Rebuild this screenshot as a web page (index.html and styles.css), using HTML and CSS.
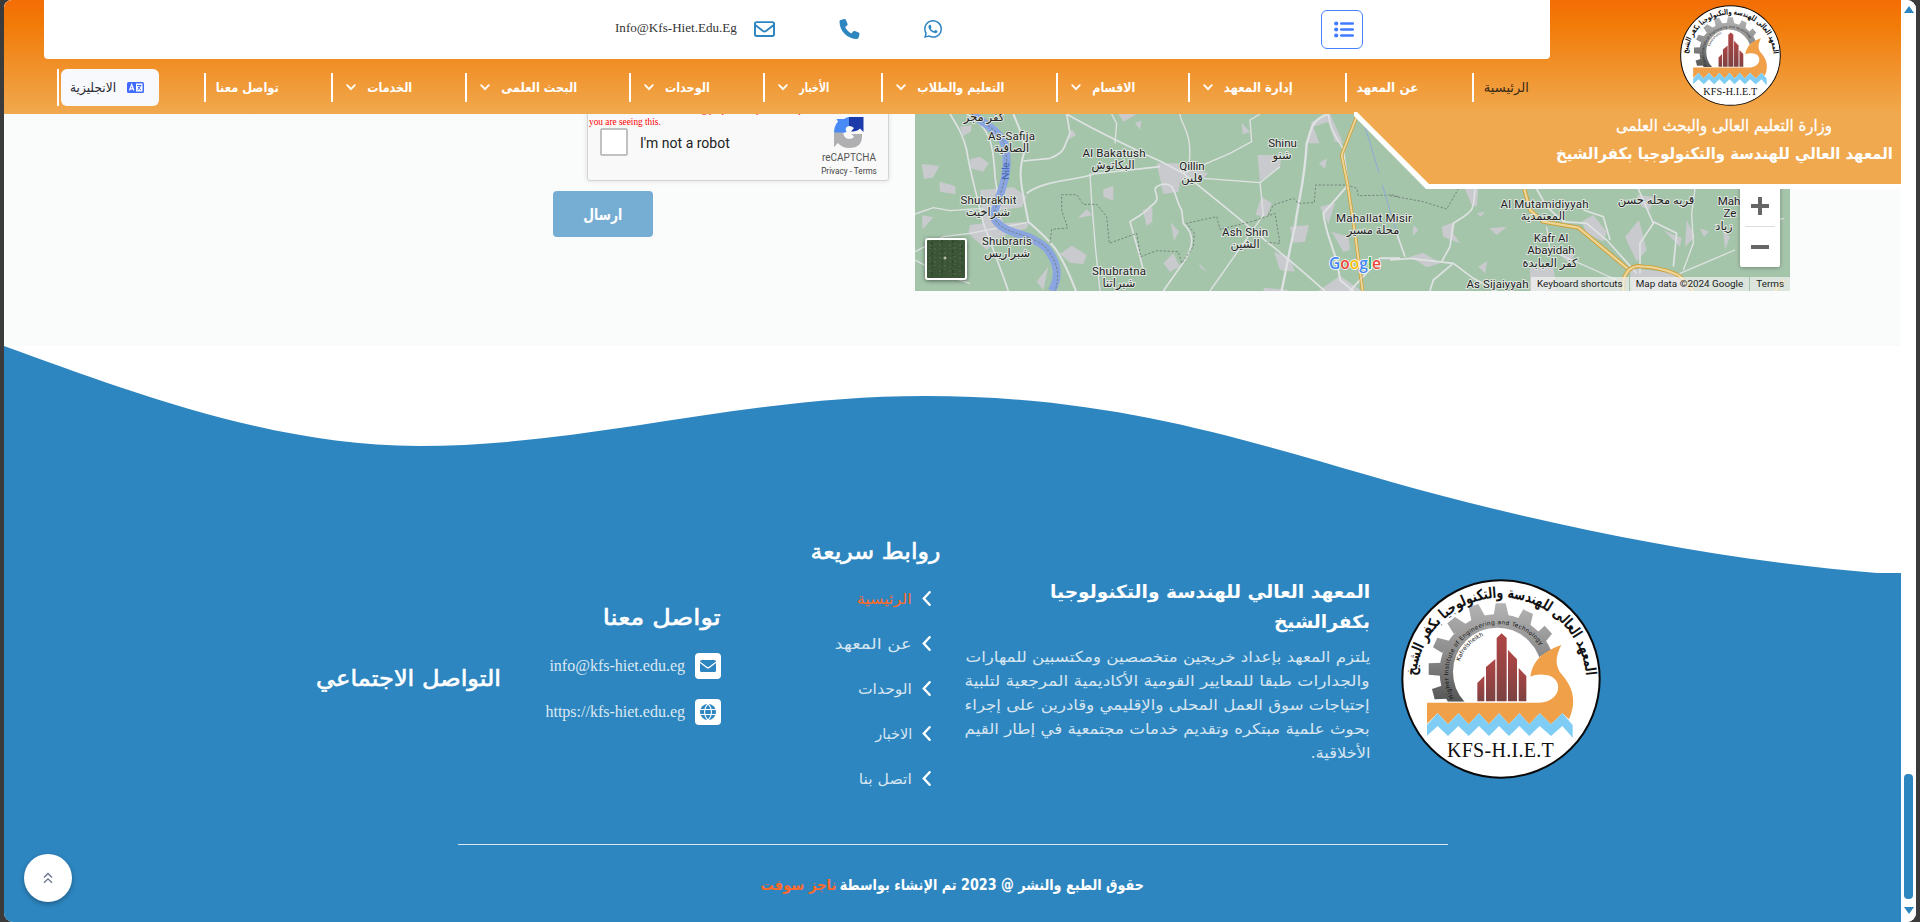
FILE: index.html
```html
<!DOCTYPE html>
<html lang="ar">
<head>
<meta charset="utf-8">
<title>المعهد العالي للهندسة والتكنولوجيا بكفرالشيخ</title>
<link rel="stylesheet" href="styles.css">
</head>
<body>
<svg class="defs" width="0" height="0" aria-hidden="true">
  <defs>
    <linearGradient id="gearU" gradientUnits="userSpaceOnUse" x1="0" y1="130" x2="0" y2="425"><stop offset="0" stop-color="#b4b4b4"/><stop offset=".5" stop-color="#8d8d8d"/><stop offset="1" stop-color="#555"/></linearGradient>
    <linearGradient id="tower" x1="0" y1="0" x2="0" y2="1"><stop offset="0" stop-color="#b04545"/><stop offset="1" stop-color="#7c4242"/></linearGradient>
    <path id="arcAr" d="M118 440 A256 256 0 1 1 610 440"/>
    <path id="arcEn" d="M228 424 A148 148 0 0 1 488 266"/>
    <path id="arcKf" d="M236 322 A124 124 0 0 1 330 222"/>
    <clipPath id="gearClip"><path d="M100 100H540V255L480 290L450 345L300 425H100Z"/></clipPath>
    <symbol id="logo" viewBox="64 57 600 600">
      <circle cx="364" cy="357" r="296" fill="#fff" stroke="#0a0a0a" stroke-width="6"/>
      <g clip-path="url(#gearClip)">
        <g fill="url(#gearU)">
          <path d="M341 172L348 130L378 130L388 172Z"/>
          <path d="M411 182L431 148L460 162L452 196Z"/>
          <path d="M464 226L495 197L517 221L492 252Z"/>
          <path d="M276 186L267 141L296 132L318 172Z"/>
          <path d="M222 221L203 190L226 171L262 194Z"/>
          <path d="M188 279L160 262L173 233L214 244Z"/>
          <path d="M182 347L147 344V310L188 308Z"/>
          <path d="M206 416L165 418L157 387L190 376Z"/>
        </g>
        <circle cx="353" cy="336" r="153" fill="none" stroke="url(#gearU)" stroke-width="40"/>
      </g>
      <text class="logo-ar" text-anchor="middle"><textPath href="#arcAr" startOffset="50%" textLength="760" lengthAdjust="spacingAndGlyphs">المعهد العالى للهندسة والتكنولوجيا بكفر الشيخ</textPath></text>
      <text class="logo-en" text-anchor="middle"><textPath href="#arcEn" startOffset="50%" textLength="455">Higher Institute of Engineering and Technology</textPath></text>
      <text class="logo-en" text-anchor="middle"><textPath href="#arcKf" startOffset="50%">Kafrelsheikh</textPath></text>
      <g fill="url(#tower)">
        <path d="M293 424V369L314 348V424Z"/><path d="M319 424V321L347 297V424Z"/>
        <path d="M351 424V234L366 220L381 234V424Z"/><path d="M385 424V270L412 298V424Z"/><path d="M417 424V324L440 348V424Z"/>
      </g>
      <path d="M142 428H478C550 425 555 345 490 344C475 343 465 345 452 350C460 300 490 275 545 255C530 285 525 310 540 335C575 375 595 415 568 478L548 460L514 493L480 460L449 493L419 460L388 493L358 460L328 493L298 460L267 493L236 460L205 493L174 460L142 491Z" fill="#f0a048"/>
      <path d="M142 495L174 460L205 493L236 460L267 493L298 460L328 493L358 460L388 493L419 460L449 493L480 460L514 493L548 460L579 495V533L548 498L514 528L480 498L449 528L419 498L388 528L358 498L328 528L298 498L267 528L236 498L205 528L174 498L142 527Z" fill="#7fcdf4"/>
      <text class="logo-name" x="362" y="592" text-anchor="middle" textLength="320">KFS-H.I.E.T</text>
    </symbol>
    <symbol id="chev" viewBox="0 0 10 7"><path d="M1.2 1.2L5 5.2L8.8 1.2" fill="none" stroke="currentColor" stroke-width="1.8" stroke-linecap="round"/></symbol>
    <symbol id="angle" viewBox="0 0 9 15"><path d="M7.6 1.2L1.8 7.5L7.6 13.8" fill="none" stroke="#fff" stroke-width="2.4" stroke-linecap="round"/></symbol>
  </defs>
</svg>

<div class="window">
  <div class="page">
    <header class="header">
      <div class="topbar">
        <span class="mail">Info@Kfs-Hiet.Edu.Eg</span>
        <svg class="ic-mail" viewBox="0 0 512 384"><path fill="none" stroke="#2e86c1" stroke-width="48" stroke-linejoin="round" d="M64 24H448Q488 24 488 64V320Q488 360 448 360H64Q24 360 24 320V64Q24 24 64 24ZM30 96L220 240Q256 264 292 240L482 96"/></svg>
        <svg class="ic-phone" viewBox="0 0 512 512"><path fill="#2e86c1" d="M164.900 24.600c-7.700-18.600-28-28.500-47.400-23.200l-88 24C12.100 30.200 0 46 0 64C0 311.400 200.600 512 448 512c18 0 33.800-12.100 38.600-29.500l24-88c5.300-19.400-4.600-39.700-23.200-47.400l-96-40c-16.300-6.800-35.200-2.100-46.300 11.600L304.700 368C234.300 334.700 177.300 277.700 144 207.300L193.300 167c13.700-11.200 18.400-30 11.600-46.300l-40-96z"/></svg>
        <svg class="ic-wa" viewBox="0 0 448 448"><path fill="#2e86c1" d="M380.900 65.100C339 23.100 283.200 0 223.900 0C101.500 0 1.900 99.600 1.900 222c0 39.100 10.200 77.300 29.600 111L0 448l117.700-30.900c32.400 17.700 68.900 27 106.100 27h.1c122.300 0 224.100-99.600 224.100-222c0-59.300-25.200-115-67.100-157zM223.900 406.700c-33.200 0-65.700-8.900-94-25.700l-6.700-4l-69.800 18.300L72 327.200l-4.400-7c-18.500-29.400-28.200-63.300-28.200-98.200c0-101.700 82.800-184.500 184.600-184.500c49.300 0 95.600 19.200 130.400 54.100s56.200 81.200 56.100 130.500c0 101.800-84.900 184.600-186.600 184.600zM325.100 268.500c-5.500-2.800-32.800-16.200-37.900-18c-5.100-1.900-8.800-2.800-12.500 2.800c-3.700 5.600-14.300 18-17.600 21.800c-3.200 3.700-6.500 4.200-12 1.400c-32.600-16.300-54-29.100-75.500-66c-5.700-9.800 5.700-9.100 16.300-30.300c1.800-3.700.9-6.900-.5-9.700c-1.400-2.800-12.500-30.100-17.100-41.200c-4.500-10.800-9.100-9.300-12.500-9.500c-3.200-.2-6.900-.2-10.600-.2s-9.700 1.400-14.800 6.900c-5.100 5.600-19.400 19-19.400 46.300s19.900 53.700 22.600 57.400c2.800 3.700 39.100 59.700 94.800 83.800c35.200 15.200 49 16.500 66.600 13.900c10.700-1.600 32.800-13.400 37.400-26.400s4.600-24.100 3.200-26.400c-1.300-2.500-5-3.900-10.500-6.600z"/></svg>
        <button class="menu-btn"><svg viewBox="0 0 20 17"><g fill="#3f7cff"><circle cx="2.200" cy="2.500" r="2.100"/><circle cx="2.200" cy="8.500" r="2.100"/><circle cx="2.200" cy="14.500" r="2.100"/><rect x="6" y="1.300" width="14" height="2.500" rx="1.200"/><rect x="6" y="7.300" width="14" height="2.500" rx="1.200"/><rect x="6" y="13.300" width="14" height="2.500" rx="1.200"/></g></svg></button>
      </div>
      <nav class="nav">
        <a class="item lang w-lang"><span class="pill"><span class="fit" data-w="46"><span>الانجليزية</span></span><svg width="17" height="11" viewBox="0 0 17 11"><rect width="17" height="11" rx="1.500" fill="#3f6bff"/><rect x="9" y="1.500" width="6.500" height="8" fill="#fff"/><path d="M2.500 8.500L4.700 2.500L6.900 8.500M3.300 6.800H6.100" stroke="#fff" fill="none" stroke-width="1.200"/><path d="M10 3.500H14.500M13.500 3.500Q13 6.500 10.300 8M11 4.800Q12 7 14 8" stroke="#3f6bff" fill="none"/></svg></span></a>
        <a class="item w-contact"><span class="fit" data-w="63"><span>تواصل معنا</span></span></a>
        <a class="item drop w-services"><svg class="chev"><use href="#chev"/></svg><span class="fit" data-w="45"><span>الخدمات</span></span></a>
        <a class="item drop w-research"><svg class="chev"><use href="#chev"/></svg><span class="fit" data-w="76"><span>البحث العلمى</span></span></a>
        <a class="item drop w-units"><svg class="chev"><use href="#chev"/></svg><span class="fit" data-w="45"><span>الوحدات</span></span></a>
        <a class="item drop w-news"><svg class="chev"><use href="#chev"/></svg><span class="fit" data-w="30"><span>الأخبار</span></span></a>
        <a class="item drop w-edu"><svg class="chev"><use href="#chev"/></svg><span class="fit" data-w="87"><span>التعليم والطلاب</span></span></a>
        <a class="item drop w-depts"><svg class="chev"><use href="#chev"/></svg><span class="fit" data-w="43"><span>الاقسام</span></span></a>
        <a class="item drop w-admin"><svg class="chev"><use href="#chev"/></svg><span class="fit" data-w="69"><span>إدارة المعهد</span></span></a>
        <a class="item w-about"><span class="fit" data-w="62"><span>عن المعهد</span></span></a>
        <a class="item active"><span class="fit" data-w="45"><span>الرئيسية</span></span></a>
      </nav>
      <div class="brand">
        <svg class="brand-shape" viewBox="0 0 547 77"><path d="M0 0H547V77H72L0 4Z" fill="#fff"/><path d="M3 0H547V72H75Z" fill="#f0a94e"/></svg>
        <svg class="brand-logo"><use href="#logo"/></svg>
        <span class="fit ministry" data-w="216"><span>وزارة التعليم العالى والبحث العلمى</span></span>
        <span class="fit institute" data-w="337"><span>المعهد العالي للهندسة والتكنولوجيا بكفرالشيخ</span></span>
      </div>
    </header>

    <main class="main">
      <div class="form-col">
        <div class="captcha">
          <p class="warn">This reCAPTCHA is for testing purposes only. Please report to the site admin if<br>you are seeing this.</p>
          <div class="captcha-row">
            <span class="box"></span>
            <span class="robot">I'm not a robot</span>
            <span class="rc">
              <svg viewBox="0 0 30 31"><path fill="#1c3aa9" d="M15 0H29.500V15L26 11.500Q23 15 17 14.500L20 11Q18 9 15 9Z"/><path fill="#4a8af5" d="M15 0V9Q10 10 12.500 15L9 16H0Q0 9 4 4.500L2.500 2H10Q12 .4 15 0Z"/><path fill="#b0b0b2" d="M0 15.500H9Q10 22 15 22Q18 22 20 20L17.500 17H28Q29 31 15 31Q8 31 4 26L0 30Z"/></svg>
              <span class="rc-name">reCAPTCHA</span>
              <span class="rc-links">Privacy - Terms</span>
            </span>
          </div>
        </div>
        <button class="send"><span class="fit" data-w="39"><span>ارسال</span></span></button>
      </div>
      <div class="map">
        <svg class="map-art" viewBox="915 100 875 191">
          <rect x="915" y="100" width="875" height="191" fill="#a5c5ab"/>
          <g transform="translate(900 100) scale(.33333)">
            <g fill="#c9cace">
              <path d="M65 192L118 198L100 232L72 237Z"/><path d="M210 178L240 170L266 190L250 215L212 205Z"/><path d="M118 245L166 258V283L120 275Z"/><path d="M66 346L100 352L68 388Z"/><path d="M240 270L340 262L380 290L365 322L300 330L310 370L390 365L380 385L300 410L260 450L205 400L210 375L250 370L245 320Z"/><path d="M180 80L215 75L212 95L190 108Z"/><path d="M610 268L640 258V302L610 290Z"/><path d="M533 355L560 328L578 345Z"/><path d="M705 68L725 62L720 90Z"/><path d="M515 88L528 105L505 120Z"/><path d="M480 462L515 437L560 465L550 492L510 488Z"/><path d="M728 330L757 322V365L740 378Z"/><path d="M812 367L837 395L822 422Z"/><path d="M770 190L830 190L925 220L905 240L840 245L835 275L790 282Z"/><path d="M895 487L920 515L903 505Z"/><path d="M1025 68L1050 96L1028 103Z"/><path d="M1257 190L1281 175L1275 207Z"/><path d="M1085 290L1115 310L1100 350L1066 345Z"/><path d="M1170 380L1227 375L1215 425L1180 428Z"/><path d="M1122 455L1170 475L1185 515L1140 510Z"/><path d="M1073 165L1145 165L1140 200L1085 240L1080 248Z"/><path d="M1290 42L1330 130L1305 125L1285 65L1240 80L1258 130L1222 130L1235 65Z"/><path d="M1260 320L1305 310L1285 372Z"/><path d="M1295 395L1345 410L1350 450L1330 455Z"/><path d="M1090 563L1165 570V573H1092Z"/><path d="M1255 573L1320 527L1385 573Z"/><path d="M790 490L820 460L840 500L810 515Z"/><path d="M410 545L445 500L430 570Z"/><path d="M655 42H710L670 65Z"/>
            </g>
            <g fill="none" stroke="#dfe2e2" stroke-width="5">
              <path stroke-width="6" d="M340 42C360 90 370 110 375 150C350 220 365 260 385 365C460 430 480 450 528 573"/>
              <path stroke-width="4" d="M45 342L100 323L150 332L250 325M45 455L130 410L210 400L380 368M45 480L130 525L210 550"/>
              <path d="M150 42C180 90 190 110 200 150C210 220 235 300 250 370C280 450 300 500 325 573"/><path d="M200 42C270 80 280 130 285 230L300 330"/><path d="M500 42C600 100 690 140 740 165C800 190 830 210 850 220C900 260 1000 340 1100 425C1170 480 1220 525 1275 573"/><path d="M370 183L450 175C500 155 490 140 510 100L500 42M380 280C430 240 540 240 580 222L780 200" /><path stroke-width="4" d="M570 220C575 330 580 350 585 430L600 573M635 42L650 70L645 130M840 42C840 70 880 100 867 190L840 215"/><path d="M780 255C830 240 820 290 845 330L850 370C880 400 885 430 855 480L790 573"/><path d="M780 255C740 270 800 290 750 320C730 345 710 350 690 365L720 470L732 520"/><path stroke-width="4" d="M850 220L990 160L1055 125L1050 60L1080 42M910 235L1080 248L1090 345L930 573M1080 248L1140 200"/><path stroke-width="7" d="M1285 42C1230 60 1235 90 1220 130C1215 240 1195 300 1185 380C1170 440 1160 500 1145 573"/><path d="M1285 42C1290 100 1320 120 1330 150L1365 400L1390 573" /><path stroke-width="6" d="M1340 260L1270 340C1280 420 1310 450 1320 540L1360 573M1350 573L1440 475L1500 475"/>
            </g>
            <path d="M215 42C270 80 320 110 318 160C330 230 290 300 280 350C310 410 380 390 440 445C475 490 480 530 455 573" fill="none" stroke="#8aa5e0" stroke-width="24"/>
            <path d="M215 42C270 80 320 110 318 160C330 230 290 300 280 350C310 410 380 390 440 445C475 490 480 530 465 573M450 430L455 388L503 384L485 330V284H530L550 313H590L620 350L628 430L710 400L722 470L770 452L835 455L845 490L880 440L883 400L860 370L950 350L960 388L1065 362M1065 362L1125 340L1140 430L1100 427M1105 345L1120 315L1180 295L1195 310L1243 308L1247 255L1340 255L1370 265L1375 287L1480 285L1500 292" fill="none" stroke="#6c7a74" stroke-width="2.500" stroke-dasharray="7 5"/>
            <path d="M1370 50L1325 165L1342 250L1365 400L1388 573" fill="none" stroke="#c99a2e" stroke-width="10"/><path d="M1370 50L1325 165L1342 250L1365 400L1388 573" fill="none" stroke="#ecd596" stroke-width="6"/>
            <path d="M1395 80L1437 218M1447 255L1500 430" stroke="#8fa9d6" stroke-width="3"/>
          </g>
          <g transform="translate(1390 100) scale(.33333)">
            <g fill="#c9cace"><path d="M225 267L265 267L260 320L245 315Z"/><path d="M260 340L285 335L273 350Z"/><path d="M155 380L195 365L190 400L210 430L160 410Z"/><path d="M298 385L350 380L320 405Z"/><path d="M70 375L85 390L68 408Z"/><path d="M575 365L610 345L650 395L640 425L590 400Z"/><path d="M705 410L747 360L770 450L740 485Z"/><path d="M820 390L875 415L870 440Z"/><path d="M890 360L915 410L885 440Z"/><path d="M930 385L957 395L942 410Z"/><path d="M1000 395L1020 410L1005 450Z"/><path d="M265 500L292 483L285 520Z"/><path d="M720 505L870 520L910 573L725 573Z"/><path d="M420 500L490 500L500 573H420Z"/><path d="M740 285L790 290L780 330L755 320Z"/><path d="M60 470L100 458L150 490L110 502Z"/><path d="M490 450L555 460L540 490Z"/></g>
            <g fill="none" stroke="#dfe2e2" stroke-width="5"><path d="M0 480L60 475L190 490L250 535L320 573M190 490L130 540L120 573"/><path d="M255 267C250 340 250 330 190 370L180 440L155 485M20 400L45 470"/><path d="M440 267L470 320L520 365L590 370L650 420L740 520M580 330L640 350L660 420"/><path d="M745 267L790 370L750 430L750 520M790 365L860 400L850 500"/><path stroke-width="4" d="M915 267L905 340L910 430L880 510M470 380L480 450L680 540M1160 300V360L1183 355M1035 450L870 520"/></g>
            <path d="M403 267L420 330L460 365L565 383L712 505M700 573C695 530 715 490 760 500C800 500 860 520 870 530L910 573M1155 573L1183 540" fill="none" stroke="#cf9b2e" stroke-width="12"/><path d="M403 267L420 330L460 365L565 383L712 505M700 573C695 530 715 490 760 500C800 500 860 520 870 530L910 573M1155 573L1183 540" fill="none" stroke="#ecd596" stroke-width="7"/>
            <path d="M0 287L100 305L170 327L205 267" fill="none" stroke="#6c7a74" stroke-width="2.500" stroke-dasharray="7 5"/>
          </g>
          <g class="places" text-anchor="middle">
            <text x="984" y="121">كفر مجر</text><text x="1011.500" y="140" textLength="47">As-Safija</text><text x="1011.500" y="152">الصافية</text>
            <text x="1114" y="157" textLength="63">Al Bakatush</text><text x="1113" y="169">البكاتوش</text>
            <text x="1192" y="170">Qillin</text><text x="1192" y="182">قلين</text>
            <text x="1282.500" y="147">Shinu</text><text x="1282" y="159">شنو</text>
            <text x="988.500" y="204" textLength="56">Shubrakhit</text><text x="988" y="216">شبراخيت</text>
            <text x="1007" y="245" textLength="50">Shubraris</text><text x="1007" y="257">شبراريس</text>
            <text x="1119" y="275" textLength="54">Shubratna</text><text x="1119" y="287">شبراتنا</text>
            <text x="1245" y="236" textLength="46">Ash Shin</text><text x="1245" y="248">الشين</text>
            <text x="1374" y="222" textLength="76">Mahallat Misir</text><text x="1373" y="234">محلة مسير</text>
            <text x="1544.500" y="208" textLength="88">Al Mutamidiyyah</text><text x="1543" y="220">المعتمدية</text>
            <text x="1551" y="242">Kafr Al</text><text x="1551" y="254">Abayidah</text><text x="1550" y="267">كفر العبابدة</text>
            <text x="1656" y="204">قريه محله حسن</text>
            <text x="1729" y="205">Mah</text><text x="1730" y="217">Ze</text><text x="1724" y="230">زياد</text>
            <text x="1497.500" y="288" textLength="62">As Sijaiyyah</text>
            <text class="river" transform="translate(1009 171) rotate(-88)">Nile</text>
          </g>
          <text class="google" x="1329" y="269"><tspan fill="#4285f4">G</tspan><tspan fill="#ea4335">o</tspan><tspan fill="#fbbc05">o</tspan><tspan fill="#4285f4">g</tspan><tspan fill="#34a853">l</tspan><tspan fill="#ea4335">e</tspan></text>
        </svg>
        <svg class="sat" viewBox="0 0 38 38"><rect width="38" height="38" fill="#3d5537"/><path d="M3 0V38M8 4V30M13 0V38M18 8V34M23 0V38M28 3V36M33 0V38" stroke="#587050" stroke-dasharray="1 3 2 2 1 4"/><path d="M5 2V38M15 0V38M26 0V38M35 5V35" stroke="#2f4a2e" stroke-width="2" stroke-dasharray="3 2 1 4"/><circle cx="18" cy="18" r="1.500" fill="#b4bda8"/></svg>
        <div class="zoomer"><svg viewBox="0 0 18 18"><path d="M9 0V18M0 9H18" stroke="#666" stroke-width="4"/></svg><i></i><svg viewBox="0 0 18 18"><path d="M0 9H18" stroke="#666" stroke-width="4"/></svg></div>
        <div class="credits"><span>Keyboard shortcuts</span><span>Map data ©2024 Google</span><span>Terms</span></div>
      </div>
    </main>

    <footer class="footer">
      <svg class="wave" viewBox="4 346 1897 228" preserveAspectRatio="none"><path fill="#2e86c0" d="M4 346C120 388 270 446 418 446C590 446 740 396 925 396C1150 396 1290 458 1470 503C1610 538 1750 563 1883 573.500H1901V575H4Z"/></svg>
      <div class="cols">
        <section class="social"><h3><span class="fit" data-w="185"><span>التواصل الاجتماعي</span></span></h3></section>
        <section class="contact">
          <h3><span class="fit" data-w="118"><span>تواصل معنا</span></span></h3>
          <p>info@kfs-hiet.edu.eg<b><svg viewBox="0 0 16 12"><path fill="#2e86c0" d="M1.500 0H14.500Q16 0 16 1.500L9 6.800Q8 7.500 7 6.800L0 1.500Q0 0 1.500 0ZM0 3L6.500 7.900Q8 9 9.500 7.900L16 3V10.500Q16 12 14.500 12H1.500Q0 12 0 10.500Z"/></svg></b></p>
          <p>https://kfs-hiet.edu.eg<b><svg class="globe" viewBox="0 0 16 16"><circle cx="8" cy="8" r="8" fill="#2e86c0"/><path d="M0 5.500H16M0 10.500H16M8 0C3.500 4 3.500 12 8 16C12.500 12 12.500 4 8 0" fill="none" stroke="#fff" stroke-width="1.100"/></svg></b></p>
        </section>
        <section class="links">
          <h3><span class="fit" data-w="130"><span>روابط سريعة</span></span></h3>
          <a class="on"><span class="fit" data-w="55"><span>الرئيسية</span></span><svg><use href="#angle"/></svg></a>
          <a><span class="fit" data-w="77"><span>عن المعهد</span></span><svg><use href="#angle"/></svg></a>
          <a><span class="fit" data-w="54"><span>الوحدات</span></span><svg><use href="#angle"/></svg></a>
          <a><span class="fit" data-w="37"><span>الاخبار</span></span><svg><use href="#angle"/></svg></a>
          <a><span class="fit" data-w="53"><span>اتصل بنا</span></span><svg><use href="#angle"/></svg></a>
        </section>
        <section class="about">
          <h4><span class="fit" data-w="320"><span>المعهد العالي للهندسة والتكنولوجيا</span></span><span class="fit" data-w="96"><span>بكفرالشيخ</span></span></h4>
          <div class="para">
            <span class="fit" data-w="405"><span>يلتزم المعهد بإعداد خريجين متخصصين ومكتسبين للمهارات</span></span>
            <span class="fit" data-w="405"><span>والجدارات طبقا للمعايير القومية الأكاديمية المرجعية لتلبية</span></span>
            <span class="fit" data-w="405"><span>إحتياجات سوق العمل المحلى والإقليمي وقادرين على إجراء</span></span>
            <span class="fit" data-w="405"><span>بحوث علمية مبتكره وتقديم خدمات مجتمعية في إطار القيم</span></span>
            <span class="fit" data-w="60"><span>الأخلاقية.</span></span>
          </div>
        </section>
        <svg class="foot-logo"><use href="#logo"/></svg>
      </div>
      <hr>
      <div class="copy"><span class="fit maker" data-w="76"><span>ناجز سوفت</span></span><span class="fit" data-w="304"><span>حقوق الطبع والنشر @ 2023 تم الإنشاء بواسطة</span></span></div>
      <button class="totop"><svg viewBox="0 0 10 12"><path d="M1 5.500L5 1.500L9 5.500M1 10.800L5 6.800L9 10.800" fill="none" stroke="#66708f" stroke-width="1.300"/></svg></button>
    </footer>
  </div>
  <div class="scrollbar"><i class="up"></i><i class="thumb"></i><i class="down"></i></div>
</div>
<script src="fit.js"></script>
</body>
</html>
```
FILE: styles.css
```css
* { box-sizing: border-box; }
body { margin: 0; height: 922px; overflow: hidden; background: #3b3b3b; font-family: "DejaVu Sans", sans-serif; }
button { border: 0; padding: 0; font: inherit; }
p, h3, h4 { margin: 0; font-weight: 500; }
.defs { position: absolute; }
svg { display: block; flex: none; }

.fit { display: block; flex: none; direction: rtl; white-space: nowrap; }
.fit > span { display: inline-block; transform-origin: right center; }

.window { position: relative; display: flex; height: 922px; margin: 0 4px; background: #fff; border-radius: 8px 9px 9px 9px; overflow: hidden; }
.page { width: 1897px; display: flex; flex-direction: column; }

.header { position: absolute; z-index: 2; left: 0; top: 0; width: 1897px; height: 114px; background: linear-gradient(#f36d05, #f27b08 22%, #f18d24 52%, #f0a94e); }
.topbar { display: flex; align-items: center; width: 1506px; height: 59px; margin-left: 40px; padding: 0 0 12px 571px; background: #fff; border-radius: 0 0 4px 4px; }
.mail { width: 121px; margin-right: 18px; font: 13.100px "Liberation Serif", serif; color: #333; white-space: nowrap; padding-top: 9px; }
.ic-mail { width: 21px; height: 16px; margin: 11px 64px 0 0; }
.ic-phone { width: 21px; height: 20px; margin: 11px 64px 0 0; }
.ic-wa { width: 18px; height: 18px; margin: 10px 379px 0 0; }
.menu-btn { display: flex; align-items: center; justify-content: center; width: 42px; height: 39px; margin-top: 12px; border: 1px solid #4a80ff; border-radius: 6px; background: #fff; }
.menu-btn svg { width: 20px; height: 17px; margin-left: 4px; }

.nav { display: flex; align-items: center; height: 57px; padding-left: 53px; font-size: 13px; font-weight: bold; color: #fff; }
.item { display: flex; align-items: center; height: 29px; padding-left: 10px; border-left: 2px solid #fff; flex: none; }
.drop { padding-left: 13px; }
.chev { width: 10px; height: 7px; margin-right: 11px; }
.w-lang { width: 147px; } .w-contact { width: 127px; } .w-services { width: 134px; } .w-research { width: 164px; }
.w-units { width: 134px; } .w-news { width: 118px; } .w-edu { width: 175px; } .w-depts { width: 132px; }
.w-admin { width: 157px; } .w-about { width: 127px; }
.lang { height: 37px; padding-left: 2px; }
.pill { display: flex; align-items: center; gap: 11px; width: 98px; height: 37px; padding-left: 9px; border-radius: 6px; background: #f8f9fd; color: #2b2b33; font-weight: normal; }
.active { color: #3a2a17; font-weight: normal; }

.brand { position: absolute; right: 0; top: 0; width: 547px; height: 190px; display: flex; flex-direction: column; align-items: flex-end; color: #fff; pointer-events: none; }
.brand-shape { position: absolute; left: 0; top: 112px; width: 547px; height: 77px; }
.brand-logo { position: relative; width: 101px; height: 101px; margin: 5px 120px 6px 0; }
.ministry { position: relative; height: 27px; line-height: 27px; margin-right: 69px; font-size: 16px; -webkit-text-stroke: .3px #fff; }
.institute { position: relative; height: 30px; line-height: 30px; margin-right: 8px; font-size: 16px; font-weight: bold; }

.main { display: flex; align-items: flex-start; height: 346px; background: #fafcfc; flex: none; }
.form-col { width: 911px; padding: 88px 0 0 549px; }
.captcha { width: 302px; height: 93px; margin: 0 0 10px 34px; padding-top: 15px; background: #f9f9f9; border: 1px solid #d3d3d3; border-radius: 3px; box-shadow: 0 0 4px 1px rgba(0, 0, 0, .08); }
.warn { height: 24px; padding-left: 1px; font: 9.300px/12px "Liberation Serif", serif; color: #f00; white-space: nowrap; }
.captcha-row { display: flex; align-items: flex-start; padding-left: 12px; }
.box { flex: none; width: 28px; height: 28px; margin-right: 12px; border: 2px solid #c1c1c1; border-radius: 2px; background: #fff; }
.robot { flex: none; width: 161px; font: 14px/30px Roboto, sans-serif; color: #222; }
.rc { display: flex; flex-direction: column; align-items: center; flex: none; width: 96px; margin-top: -11px; font-family: Roboto, sans-serif; color: #555; }
.rc svg { width: 30px; height: 31px; }
.rc-name { font-size: 10px; line-height: 19px; }
.rc-links { font-size: 8.200px; line-height: 8px; color: #444; }
.send { display: flex; align-items: center; justify-content: center; width: 100px; height: 46px; border-radius: 4px; background: #76aed3; color: #fff; font-size: 16px; font-weight: bold; }

.map { position: relative; width: 875px; height: 191px; margin-top: 100px; }
.map-art { width: 875px; height: 191px; }
.places { font: 11.500px Roboto, "DejaVu Sans", sans-serif; fill: #222; stroke: #dfe6e0; stroke-width: 2px; paint-order: stroke; }
.places .river { fill: #4267b8; stroke: none; font-size: 10px; }
.google { font: 600 15.500px "Open Sans", sans-serif; stroke: #fff; stroke-width: 1.500px; paint-order: stroke; }
.sat { position: absolute; left: 10px; top: 138px; width: 42px; height: 42px; border: 2px solid #fff; border-radius: 3px; box-shadow: 0 1px 4px rgba(0, 0, 0, .5); }
.zoomer { position: absolute; right: 10px; top: 40px; width: 40px; height: 127px; padding-top: 57px; display: flex; flex-direction: column; align-items: center; background: #fff; border-radius: 2px; box-shadow: 0 1px 4px rgba(0, 0, 0, .3); }
.zoomer svg { width: 18px; height: 18px; }
.zoomer i { width: 30px; height: 1px; margin: 11px 0; background: #ddd; flex: none; }
.credits { position: absolute; right: 0; bottom: 0; display: flex; height: 14px; font: 9.900px/14px Roboto, sans-serif; color: #222; background: rgba(245, 245, 245, .68); }
.credits span { padding: 0 6px; border-left: 1px solid #a5c5ab; }
.credits span:first-child { border: 0; }

.footer { position: relative; height: 576px; background: linear-gradient(#fff 227px, #2e86c0 227px); color: #fff; }
.wave { width: 1897px; height: 228px; }
.cols { display: flex; align-items: center; height: 210px; padding-left: 312px; }
.social h3, .contact h3, .links h3 { font-size: 22px; line-height: 30px; -webkit-text-stroke: .6px #fff; }
.social { width: 229px; }
.contact { width: 176px; margin-right: 89px; display: flex; flex-direction: column; align-items: flex-end; padding-bottom: 10px; }
.contact h3 { margin-bottom: 20px; }
.contact p { display: flex; align-items: center; gap: 10px; height: 26px; margin-bottom: 20px; font: 16px "Liberation Serif", serif; color: #dce9f3; white-space: nowrap; }
.contact b { display: flex; align-items: center; justify-content: center; width: 26px; height: 26px; border-radius: 4px; background: #fff; }
.contact b svg { width: 16px; height: 12px; }
.contact b .globe { width: 16px; height: 16px; }
.links { width: 130px; margin-right: 25px; padding-bottom: 20px; display: flex; flex-direction: column; align-items: flex-end; }
.links h3 { margin-bottom: 9px; }
.links a { display: flex; align-items: center; height: 45px; gap: 10px; padding-right: 9px; font-size: 15px; color: #d5e5f1; }
.links a svg { width: 9px; height: 15px; }
.links .on { color: #ff6a2b; }
.about { width: 405px; margin-right: 31px; padding-bottom: 17px; }
.about h4 { display: flex; flex-direction: column; align-items: flex-end; font-size: 18px; font-weight: bold; line-height: 30px; margin-bottom: 8px; }
.para { display: flex; flex-direction: column; align-items: flex-end; font-size: 15px; line-height: 24px; color: #d5e5f1; }
.foot-logo { width: 200px; height: 200px; }
.footer hr { width: 990px; height: 1px; margin: 60px 0 0 454px; border: 0; background: #dbe7f0; }
.copy { display: flex; gap: 4px; margin: 25px 0 0 756px; font-size: 15px; font-weight: bold; line-height: 30px; }
.maker { color: #ff6a2b; }
.totop { position: absolute; left: 20px; bottom: 20px; display: flex; align-items: center; justify-content: center; width: 48px; height: 48px; border-radius: 50%; background: #fff; box-shadow: 0 2px 5px rgba(0, 0, 0, .3); }
.totop svg { width: 10px; height: 12px; }

.scrollbar { width: 15px; display: flex; flex-direction: column; align-items: center; background: #fff; }
.up { margin-top: 6px; border: 5px solid transparent; border-top: 0; border-bottom: 7px solid #2e86c0; }
.thumb { width: 9px; height: 125px; margin: 761px 0 8px; border-radius: 4px; background: #2e86c0; }
.down { border: 5px solid transparent; border-bottom: 0; border-top: 7px solid #2e86c0; }

.logo-ar { font: bold 45px "DejaVu Sans", sans-serif; fill: #111; }
.logo-en { font: 17.500px "DejaVu Sans", sans-serif; fill: #111; }
.logo-name { font: 60px "Liberation Serif", serif; fill: #111; }
```
FILE: fit.js
```js
// Condense or widen each label so that it fills its column width.
document.querySelectorAll('.fit').forEach(function (el) {
  var inner = el.firstElementChild;
  var w = Number(el.dataset.w);
  var natural = inner.getBoundingClientRect().width;
  el.style.width = w + 'px';
  inner.style.transform = 'scaleX(' + (w / natural).toFixed(4) + ')';
});
```
